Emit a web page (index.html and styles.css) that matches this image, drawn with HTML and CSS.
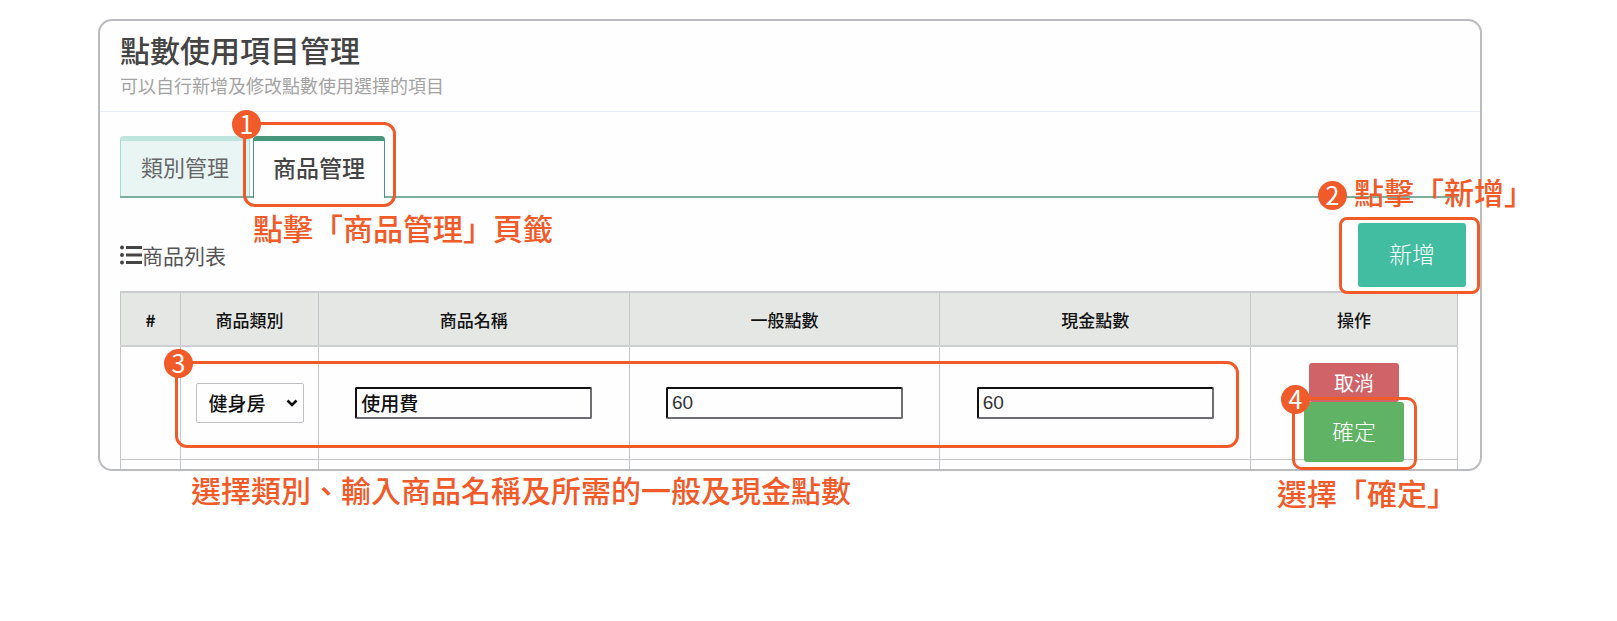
FILE: index.html
```html
<!DOCTYPE html>
<html lang="zh-Hant">
<head>
  <meta charset="UTF-8">
  <meta name="viewport" content="width=device-width, initial-scale=1.0">
  <title>點數使用項目管理</title>
  <link rel="stylesheet" href="styles.css">
</head>
<body>
  <main class="panel">
    <header class="panel-header">
      <h1>點數使用項目管理</h1>
      <p>可以自行新增及修改點數使用選擇的項目</p>
    </header>

    <div class="panel-body">
      <nav class="tabs">
        <a class="tab" href="#category">類別管理</a>
        <div class="tab-wrap">
          <a class="tab active" href="#product">商品管理</a>
          <div class="step step-tab">
            <span class="badge">1</span>
            <span class="note">點擊「商品管理」頁籤</span>
          </div>
        </div>
      </nav>

      <div class="toolbar">
        <h2>
          <svg class="list-icon" viewBox="0 0 22 20" width="22" height="20" aria-hidden="true">
            <circle cx="2" cy="2.5" r="2"/>
            <circle cx="2" cy="10" r="2"/>
            <circle cx="2" cy="17.5" r="2"/>
            <rect x="6" y="1" width="16" height="3"/>
            <rect x="6" y="8.5" width="16" height="3"/>
            <rect x="6" y="16" width="16" height="3"/>
          </svg>商品列表
        </h2>
        <div class="add-wrap">
          <button type="button" class="btn btn-add">新增</button>
          <div class="step step-add">
            <span class="badge">2</span>
            <span class="note">點擊「新增」</span>
          </div>
        </div>
      </div>

      <div class="table-wrap">
        <table>
          <colgroup>
            <col class="col-no">
            <col class="col-category">
            <col class="col-field">
            <col class="col-field">
            <col class="col-field">
            <col class="col-action">
          </colgroup>
          <thead>
            <tr>
              <th class="no">#</th>
              <th>商品類別</th>
              <th>商品名稱</th>
              <th>一般點數</th>
              <th>現金點數</th>
              <th>操作</th>
            </tr>
          </thead>
          <tbody>
            <tr class="edit-row">
              <td></td>
              <td>
                <div class="select-box">
                  <select aria-label="商品類別">
                    <option>健身房</option>
                  </select>
                  <svg class="chevron" viewBox="0 0 12 8" width="12" height="8" aria-hidden="true">
                    <path d="M1.5 1.5 6 6l4.500-4.500"/>
                  </svg>
                </div>
              </td>
              <td><input type="text" class="name" aria-label="商品名稱" value="使用費"></td>
              <td><input type="text" aria-label="一般點數" value="60"></td>
              <td><input type="text" aria-label="現金點數" value="60"></td>
              <td class="actions">
                <button type="button" class="btn btn-cancel">取消</button>
                <div class="confirm-wrap">
                  <button type="button" class="btn btn-confirm">確定</button>
                  <div class="step step-confirm">
                    <span class="badge">4</span>
                    <span class="note">選擇「確定」</span>
                  </div>
                </div>
              </td>
            </tr>
            <tr class="next-row">
              <td></td>
              <td></td>
              <td></td>
              <td></td>
              <td></td>
              <td></td>
            </tr>
          </tbody>
        </table>
        <div class="step step-fields">
          <span class="badge">3</span>
          <span class="note">選擇類別、輸入商品名稱及所需的一般及現金點數</span>
        </div>
      </div>
    </div>
  </main>
</body>
</html>
```
FILE: styles.css
```css
* {
  box-sizing: border-box;
}

body {
  display: flow-root;
  min-height: 100vh;
  margin: 0;
  background: #fff;
  font-family: "Noto Sans CJK TC", sans-serif;
  color: #444;
}

.panel {
  margin: 19px 135px 0 98px;
  border: 2px solid #bbbcc0;
  border-radius: 14px;
  background: #fefefe;
}

.panel-header {
  padding: 10px 20px 14px;
  border-bottom: 1px solid #e6ebf5;
}

h1 {
  margin: 0;
  font-size: 30px;
  font-weight: 500;
  line-height: 36px;
}

.panel-header p {
  margin: 6px 0 0;
  font-size: 18px;
  line-height: 24px;
  color: #a3a3a3;
}

.panel-body {
  padding: 24px 22px 0 20px;
}

/* tabs */
.tabs {
  display: flex;
  gap: 3px;
  border-bottom: 2px solid #7caf9d;
}

.tab {
  display: block;
  height: 60px;
  padding: 0 20px;
  border: 1px solid #a9d9ce;
  border-top: 5px solid #bee5dc;
  border-bottom: 0;
  border-radius: 4px 4px 0 0;
  background: #e8f5f3;
  color: #666;
  font-size: 22px;
  line-height: 50px;
  text-decoration: none;
}

.tab-wrap {
  position: relative;
  margin-bottom: -2px;
}

.tab.active {
  height: 62px;
  padding: 0 19px;
  border-color: #48977c;
  background: #fefefe;
  color: #444;
  font-size: 23px;
  font-weight: 500;
  line-height: 52px;
}

/* toolbar */
.toolbar {
  display: flex;
  justify-content: space-between;
  align-items: center;
  margin: 25px -8px 4px 0;
}

h2 {
  display: flex;
  align-items: center;
  margin: 0;
  font-size: 21px;
  font-weight: 400;
  color: #555;
}

.list-icon {
  fill: #444;
}

.add-wrap,
.confirm-wrap {
  position: relative;
}

.btn {
  display: block;
  margin: 0 auto;
  padding: 0 0 4px;
  border: 0;
  border-radius: 3px;
  color: #fff;
  font-family: inherit;
  font-weight: 300;
  cursor: pointer;
}

.btn-add {
  width: 108px;
  height: 64px;
  background: #42bda1;
  font-size: 23px;
}

.btn-cancel {
  width: 90px;
  height: 39px;
  padding: 0;
  background: #d06368;
  font-size: 20px;
  font-weight: 400;
}

.btn-confirm {
  width: 100px;
  height: 60px;
  background: #60b265;
  font-size: 22px;
}

/* product table */
.table-wrap {
  position: relative;
}

table {
  width: 100%;
  border-collapse: collapse;
  table-layout: fixed;
}

.col-no {
  width: 60px;
}

.col-category {
  width: 138px;
}

.col-action {
  width: 207px;
}

th,
td {
  padding: 0;
  border: 1px solid #c5c6c9;
  text-align: center;
}

th {
  height: 54px;
  border-top: 2px solid #cbcccf;
  border-bottom: 2px solid #cfd0d2;
  background: #e4e7e4;
  color: #111;
  font-size: 17px;
  font-weight: 500;
}

th.no {
  font-weight: 700;
}

.edit-row td {
  height: 113px;
}

.next-row td {
  height: 10px;
  border-bottom: 0;
}

.select-box {
  position: relative;
  width: 108px;
  margin: 0 auto;
}

select {
  width: 100%;
  height: 40px;
  padding: 0 12px;
  border: 1px solid #bfc0c3;
  border-radius: 2px;
  background: #fefefe;
  color: #111;
  font-family: inherit;
  font-size: 19px;
  font-weight: 500;
  appearance: none;
}

.chevron {
  position: absolute;
  top: 16px;
  right: 6px;
  fill: none;
  stroke: #111;
  stroke-width: 2.500;
  pointer-events: none;
}

input {
  width: 237px;
  height: 32px;
  padding: 0 4px;
  border: 2px solid;
  border-color: #111 #6d6e72 #6d6e72 #111;
  border-radius: 2px;
  background: #fefefe;
  color: #333;
  font-family: "Liberation Sans", "Noto Sans CJK TC", sans-serif;
  font-size: 19px;
}

input.name {
  color: #111;
  font-family: inherit;
  font-weight: 500;
}

td.actions {
  padding-top: 16px;
  vertical-align: top;
}

.confirm-wrap {
  width: 100px;
  margin: 0 auto -4px;
}

/* step callouts */
.step {
  position: absolute;
  z-index: 1;
  border: 3px solid #f15a29;
  border-radius: 12px;
  color: #f15a29;
  pointer-events: none;
}

.badge {
  position: absolute;
  top: -15px;
  left: -14px;
  width: 29px;
  height: 29px;
  border-radius: 50%;
  background: #f15a29;
  color: #fff;
  font-size: 25px;
  line-height: 27px;
  text-align: center;
}

.note {
  position: absolute;
  font-size: 30px;
  font-weight: 500;
  line-height: 36px;
  white-space: nowrap;
}

.step-tab {
  inset: -14px -11px -9px -10px;
}

.step-tab .note {
  top: 84px;
  left: 7px;
}

.step-add {
  inset: -6px -14px -7px -19px;
  border-radius: 8px;
}

.step-add .badge {
  top: -39px;
  left: -24px;
}

.step-add .note {
  top: -47px;
  left: 12px;
}

.step-fields {
  top: 70px;
  right: 219px;
  left: 55px;
  height: 87px;
}

.step-fields .note {
  top: 107px;
  left: 13px;
}

.step-confirm {
  inset: -5px -13px -8px -12px;
  border-radius: 10px;
}

.step-confirm .note {
  top: 74px;
  left: -18px;
}
```
